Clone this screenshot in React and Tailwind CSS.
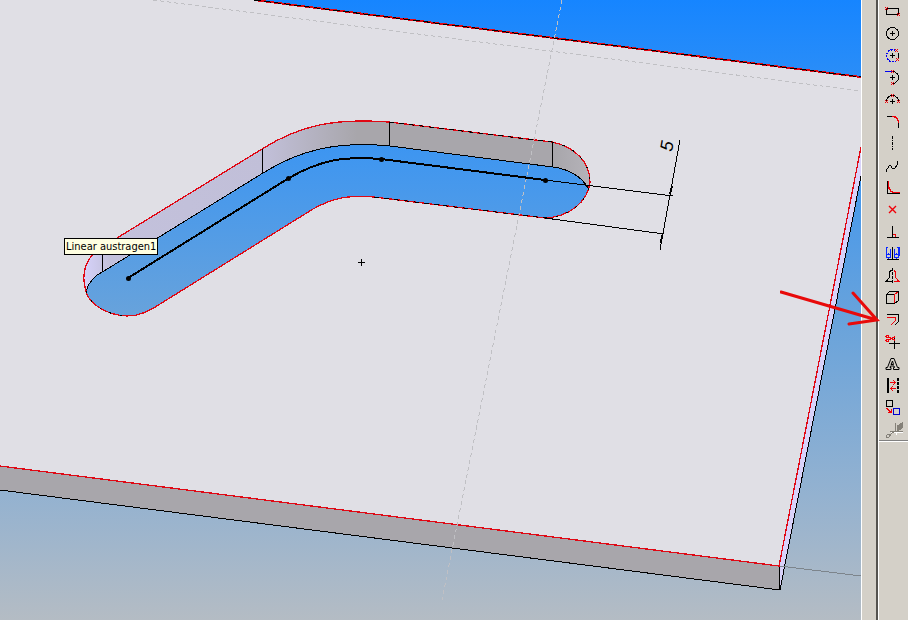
const tools = [
  {
    label: 'Rectangle',
    art: (
      <>
        <path d="M1.5 5.5h12v6h-12z" />
        <path className="stroke-[#f00008]" strokeWidth="1.4" d="M0 4l3 3M3 4l-3 3M12 10l3 3M15 10l-3 3" />
      </>
    ),
  },
  {
    label: 'Circle',
    art: (
      <>
        <circle cx="7.5" cy="8.5" r="6" />
        <path d="M5 8.5h5M7.5 6v5" />
      </>
    ),
  },
  {
    label: 'Perimeter circle',
    art: (
      <>
        <path d="M13 5.5q1 3 0 6" />
        <path className="stroke-[#0000f0]" strokeWidth="1.4" strokeDasharray="2 1" d="M10.5 3.5a6 6 0 1 0 0 10.5" />
        <path d="M5 8.5h5M7.5 6v5" />
        <path className="stroke-[#f00008]" strokeWidth="1.4" d="M10 2l3 3M13 2l-3 3M11 11l3 3M14 11l-3 3" />
      </>
    ),
  },
  {
    label: 'Tangent arc',
    art: (
      <>
        <path d="M7.5 2.5a6 6 0 0 1 0 12" />
        <path className="stroke-[#0000f0]" strokeWidth="1.4" d="M0 2.5h7" />
        <path d="M5 8.5h5M7.5 6v5" />
        <path className="stroke-[#f00008]" strokeWidth="1.4" d="M6 1l3 3M9 1l-3 3M6 13l3 3M9 13l-3 3" />
      </>
    ),
  },
  {
    label: 'Three point arc',
    art: (
      <>
        <path d="M1.5 10.5a6 6 0 0 1 12 0M5 10.5h5M7.5 8v5" />
        <path
          className="stroke-[#f00008]"
          strokeWidth="1.4"
          d="M0 9l3 3M3 9l-3 3M12 9l3 3M15 9l-3 3M6 3l3 3M9 3l-3 3"
        />
      </>
    ),
  },
  {
    label: 'Fillet',
    art: (
      <>
        <path d="M2 3.5h5M13.5 10v5" />
        <path className="stroke-[#f00008]" strokeWidth="1.4" d="M7 3.5q6.5 0 6.5 6.5" />
      </>
    ),
  },
  { label: 'Centerline', art: <path strokeDasharray="3 1 1 1" d="M7.5 1v14" /> },
  { label: 'Spline', art: <path d="M1.5 15v-2l3-4.5h1l2 3h2l3-4v-4" /> },
  {
    label: 'Offset corner',
    art: (
      <>
        <path strokeWidth="1.4" d="M2.5 2v12.5h12.5" />
        <path className="stroke-[#f00008]" strokeWidth="1.4" d="M3.5 2v5q1 6.5 6.5 6.5h5" />
      </>
    ),
  },
  {
    label: 'Point',
    art: <path className="stroke-[#f00008]" strokeWidth="1.4" shapeRendering="auto" d="M4 5l7 7M11 5l-7 7" />,
  },
  {
    label: 'Add relation',
    art: (
      <>
        <path className="stroke-[#f00008]" strokeWidth="1.4" d="M8 11.5h2.5v3" />
        <path d="M7.5 3v12M2 14.5h12" />
      </>
    ),
  },
  {
    label: 'Display relations',
    art: (
      <>
        <path d="M7.5 2v13M2 14.5h12" />
        <g className="stroke-[#0a28ff]" strokeWidth="1.2">
          <path d="M3 2.5h-1.5v8M5.5 9v-5.500M12 2.5h2v8M9.5 9v-5.5" />
          <circle cx="3.5" cy="11" r="2" />
          <circle cx="11.5" cy="11" r="2" />
        </g>
      </>
    ),
  },
  {
    label: 'Mirror',
    art: (
      <>
        <path d="M6.5 3.5h-1l-1 2v5l-3 3.5h5" />
        <path className="stroke-[#f00008]" d="M8.5 3.5h1l1 2v5l3 3.5h-5" />
        <path strokeDasharray="3 1" d="M7.5 1v15" />
      </>
    ),
  },
  {
    label: 'Convert entities',
    art: (
      <>
        <path d="M1.5 5.5h8v9h-8zM1.5 5.5l3-3h9v9l-4 3" />
        <path className="stroke-[#f00008]" d="M9.5 14v-8.5l4-3" />
      </>
    ),
  },
  {
    label: 'Offset entities',
    art: (
      <>
        <path d="M2 3.5h11.5v7l-4 4" />
        <path className="stroke-[#f00008]" strokeWidth="1.4" d="M2 6.5h8.5v3l-5 5" />
      </>
    ),
  },
  {
    label: 'Trim',
    art: (
      <>
        <path d="M9.5 4v12M4 10.5h11" />
        <g className="stroke-[#f00008]">
          <path strokeWidth="1.4" d="M3.5 4l7 3.500M3.5 7l7-3.5" />
          <circle cx="2.5" cy="3.5" r="1.5" />
          <circle cx="2.5" cy="7.5" r="1.5" />
        </g>
      </>
    ),
  },
  {
    label: 'Sketch text',
    art: (
      <path
        shapeRendering="auto"
        d="M6 3.5h3l3.5 9h1.5v2h-5.5v-2h1l-.5-1.5h-3.5l-.5 1.5h1v2h-5v-2h1.5zM7.5 6l-1.500 3.5h2.5z"
      />
    ),
  },
  {
    label: 'Linear pattern',
    art: (
      <>
        <path strokeWidth="2" d="M3 1v15" />
        <path strokeWidth="2" strokeDasharray="3 1" d="M13 1v15" />
        <path
          className="stroke-[#f00008]"
          strokeWidth="1.2"
          d="M5 5.5h6M8 3l2.5 2.5-2.5 2.5M11 11.5h-6M8 9l-2.5 2.5 2.5 2.5"
        />
      </>
    ),
  },
  {
    label: 'Move or copy',
    art: (
      <>
        <path strokeWidth="1.2" d="M1.5 1.5h6v6h-6z" />
        <path className="stroke-[#0000d0]" strokeWidth="1.4" d="M8.5 9.5h6v6h-6z" />
        <path className="stroke-[#f00008]" strokeWidth="1.2" d="M1.5 9l5 4.5M6.5 10v3.5h-3.5" />
      </>
    ),
  },
  {
    label: 'Modify sketch',
    art: (
      <g className="stroke-[#848078]">
        <path className="stroke-white" d="M6 11.5h12M11.5 11v3" />
        <path d="M5 10.5h13M10.5 2v9M10 10l-4 3-1 2" />
        <path className="fill-[#848078]" d="M12 9v-4l5-3v5l-3 2z" />
        <circle cx="3" cy="15" r="1.5" />
      </g>
    ),
  },
];

function Tool({ label, children }) {
  return (
    <button type="button" aria-label={label} title={label} className="flex h-[22px] w-7 items-center justify-center">
      <svg viewBox="0 0 16 16" className="h-4 w-4 overflow-visible fill-none stroke-black" shapeRendering="crispEdges">
        {children}
      </svg>
    </button>
  );
}

function Model() {
  return (
    <svg viewBox="0 0 861 620" preserveAspectRatio="xMinYMin slice" className="block h-full w-full">
      <defs>
        <linearGradient id="sky" x1="0" y1="0" x2="0" y2="620" gradientUnits="userSpaceOnUse">
          <stop offset="0" stopColor="#1685ff" />
          <stop offset="0.25" stopColor="#3f96f0" />
          <stop offset="0.5" stopColor="#66a2dc" />
          <stop offset="0.8" stopColor="#94b2d0" />
          <stop offset="1" stopColor="#b4bcc4" />
        </linearGradient>
        <linearGradient id="wall" x1="84" y1="0" x2="590" y2="0" gradientUnits="userSpaceOnUse">
          <stop offset="0" stopColor="#d6d2fa" />
          <stop offset="0.05" stopColor="#c3c1dc" />
          <stop offset="0.36" stopColor="#c1bfd8" />
          <stop offset="0.54" stopColor="#a8a6ab" />
          <stop offset="0.93" stopColor="#a8a6ab" />
          <stop offset="1" stopColor="#b5b3b9" />
        </linearGradient>
      </defs>

      <rect width="861" height="620" fill="url(#sky)" />

      {/* plate */}
      <path d="M0 0H254L861 77V147L779 566L0 466Z" fill="#e0dfe5" />
      <path d="M0 466L779 566V590L0 490Z" fill="#a8a6ab" />
      <path d="M861 147V176L780 590L779 566Z" fill="#d9d2fa" />

      {/* slot */}
      <path
        d="M262 149C300 125 335 118 389 122L552 142C576 147 590 163 590 182C588 202 569 217 545 218L374 197C350 195 335 197 313 209L160 304C149 311 140 316 127 316C104 315 88 302 86 291C81 276 84 256 104 246Z"
        fill="url(#wall)"
      />
      <path
        d="M263 173C301 149 339 141 390 146L553 167C569 169 582 177 588 188C585 203 568 217 545 218L374 197C350 195 335 197 313 209L160 304C149 311 140 316 127 316C104 315 90 303 86 291C89 282 95 275 104 271Z"
        fill="url(#sky)"
      />

      <g fill="none" shapeRendering="crispEdges">
        <path
          stroke="#000"
          d="M86 291C89 282 95 275 104 271L263 173C301 149 339 141 390 146L553 167C569 169 582 177 588 188M102 250L103 271M262 149L263 173M389 122V146M552 142L553 167"
        />
        <path
          stroke="#e00814"
          strokeWidth="1.3"
          d="M262 149C300 125 335 118 389 122L552 142C576 147 590 163 590 182C588 202 569 217 545 218L374 197C350 195 335 197 313 209L160 304C149 311 140 316 127 316C104 315 88 302 86 291C81 276 84 256 104 246Z"
        />
        <path stroke="#000" strokeDasharray="5 5" d="M389 122L552 142M374 197L545 218" />
        <path
          stroke="#000"
          strokeDasharray="2 9"
          d="M552 142C576 147 590 163 590 182C588 202 569 217 545 218M86 291C88 302 104 315 127 316"
        />

        {/* plate edges */}
        <path stroke="#000" d="M0 490L780 590L861 176M779 566L780 590" />
        <path stroke="#e00814" strokeWidth="1.3" d="M0 466L779 566L861 147" />
        <path stroke="#e00814" strokeWidth="2" d="M254 0L861 77" />
        <path stroke="#000" strokeDasharray="7 3" d="M254 0L861 77" />
        <path stroke="#7d858c" d="M780 566L861 576" />

        {/* reference planes */}
        <path stroke="#c0c0c4" strokeDasharray="4 3" d="M153 0L861 91M562 0L442 600" />
      </g>

      {/* sketch path */}
      <path
        d="M128 278L289 178C320 160 344 156 381 159L545 180"
        fill="none"
        stroke="#000"
        strokeWidth="2"
        shapeRendering="crispEdges"
      />
      <g>
        <circle cx="128.5" cy="278.5" r="2.5" />
        <circle cx="288.5" cy="178.5" r="2.5" />
        <circle cx="381.5" cy="159.5" r="2.5" />
        <circle cx="545.5" cy="180.5" r="2.5" />
      </g>

      {/* dimension */}
      <g fill="none" stroke="#000" shapeRendering="crispEdges">
        <path d="M545 180L673 196M545 218L664 234M680 140L660 250M358 262.5h7M361.5 259v7" />
        <path strokeWidth="2" d="M672 186L670 194M662 235L661 243" />
      </g>
      <text transform="translate(672 152) rotate(-80)" className="font-['Liberation_Sans',sans-serif] text-[18px] italic">
        5
      </text>
    </svg>
  );
}

export default function App() {
  return (
    <div className="flex h-screen overflow-hidden bg-[#d4d0c8]">
      <main className="relative min-w-0 flex-1">
        <Model />
        <div
          role="tooltip"
          className="absolute top-[238px] left-16 border border-black bg-[#ffffe1] px-px font-['DejaVu_Sans_Condensed','DejaVu_Sans',sans-serif] text-[11px] leading-[15px] whitespace-nowrap text-black"
        >
          Linear austragen1
        </div>
        {/* pointer to the offset tool, runs over the splitter */}
        <svg viewBox="0 0 100 40" className="absolute top-[288px] -right-[19px] z-10 h-10 w-[100px] fill-none stroke-[#e80a0a]">
          <path strokeWidth="3" strokeLinecap="round" d="M1 4L97 32M73 5L97 32L69 36" />
        </svg>
      </main>

      <div className="w-[17px] shrink-0 border-r-2 border-l border-r-[#55534f] border-l-white" />

      <aside className="w-[30px] shrink-0 border-l border-white">
        <div className="flex flex-col items-start border-b border-[#808080]">
          {tools.map((tool) => (
            <Tool key={tool.label} label={tool.label}>
              {tool.art}
            </Tool>
          ))}
        </div>
        <div className="h-px bg-white" />
      </aside>
    </div>
  );
}
